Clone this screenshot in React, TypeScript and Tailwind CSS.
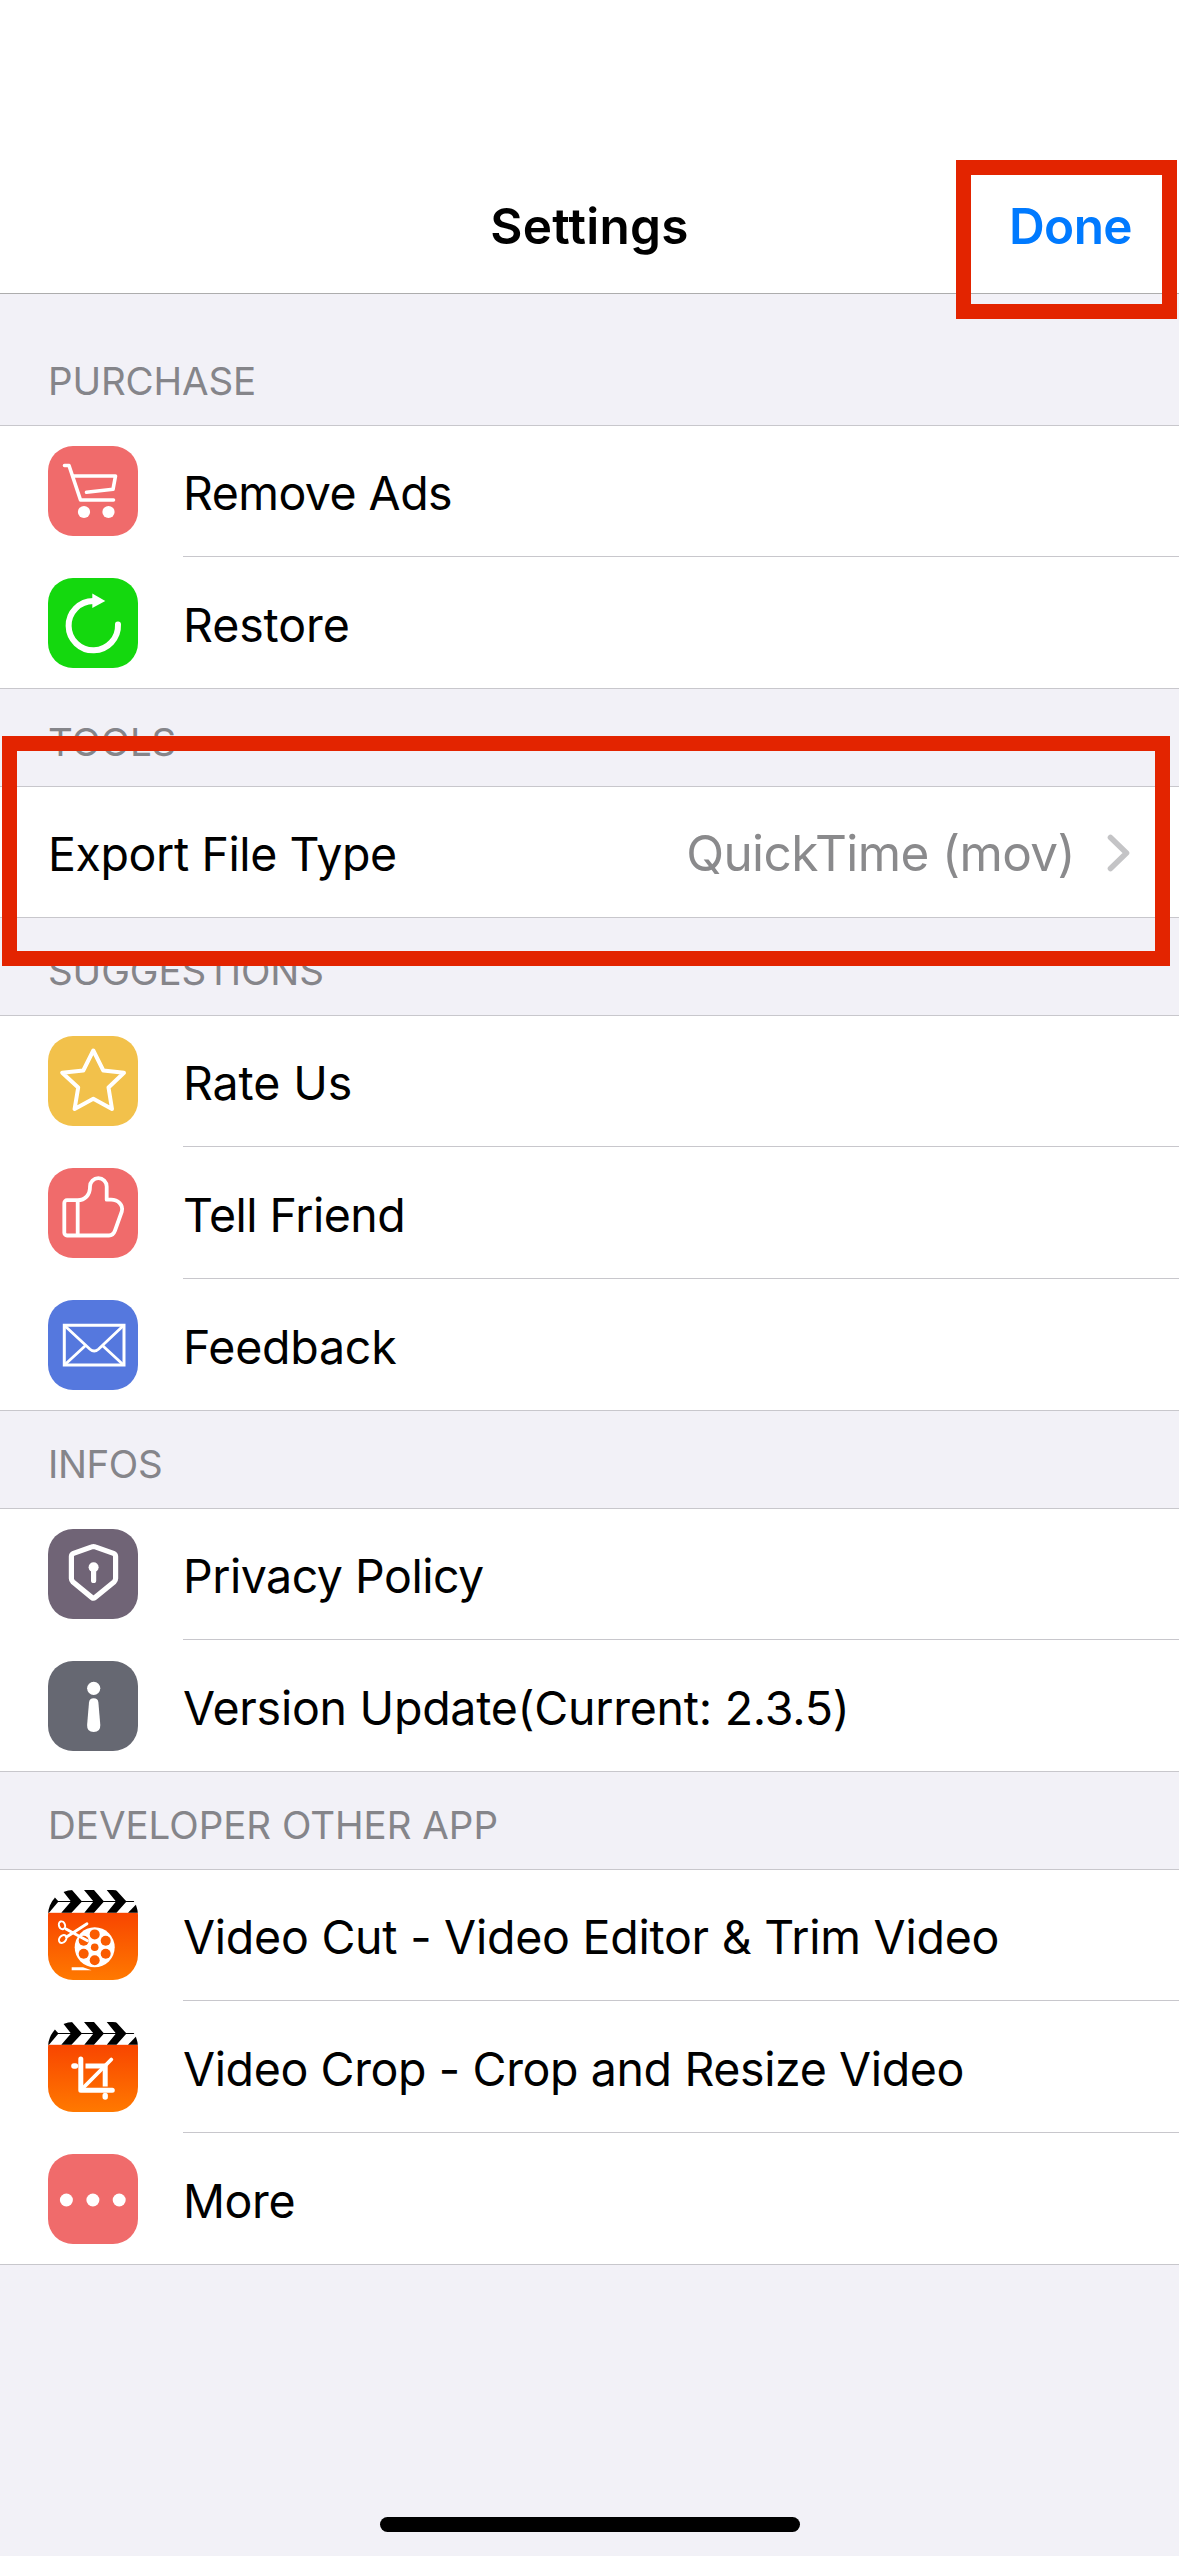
import React from 'react';

interface RowItem {
  label: string;
  tracking: string;
  icon?: React.ReactNode;
  value?: string;
}

interface Section {
  title: string;
  tracking: string;
  headerClass: string;
  rows: RowItem[];
}

const Tile: React.FC<{ color: string; children: React.ReactNode }> = ({ color, children }) => (
  <svg viewBox="0 0 90 90" className={`w-[90px] h-[90px] rounded-[25px] ${color}`} fill="none" stroke="white" strokeLinejoin="round">
    {children}
  </svg>
);

const CartIcon = () => (
  <Tile color="bg-[#f06b6b]">
    <path d="M16.5 19.5h4.5L32.5 54H65.5" strokeWidth="3.6" strokeLinecap="round" />
    <path d="M25 30H67.5L65 43.3L38.5 46.2" strokeWidth="3.6" strokeLinecap="round" />
    <circle cx="36" cy="66" r="6.1" fill="white" stroke="none" />
    <circle cx="60.5" cy="66" r="6.1" fill="white" stroke="none" />
  </Tile>
);

const RestoreIcon = () => (
  <Tile color="bg-[#14d80e]">
    <path d="M70 46.5A24.7 24.7 0 1 1 45.3 22.9" strokeWidth="6" strokeLinecap="round" />
    <path d="M44.3 15.5L57.3 23L44.3 30Z" fill="white" stroke="none" />
  </Tile>
);

const StarIcon = () => (
  <Tile color="bg-[#f2c14b]">
    <path
      d="M45.3 14.5L55.3 34.5L76 36.7L60.5 51.5L64 73L45.3 62.8L26.6 73L30.2 51.5L14.2 36.7L35.3 34.5Z"
      strokeWidth="4"
    />
  </Tile>
);

const ThumbIcon = () => (
  <Tile color="bg-[#f06b6b]">
    <path
      d="M19 32.2H29.7C37 32.2 42 27 42 19V18.5A8.3 8.3 0 0 1 58.7 18.5V31.7H63C70 31.7 75.5 37 73.8 43.5L67 62.5C65.5 66.5 64 67.5 61 67.5H19A2.7 2.7 0 0 1 16.3 64.8V34.9A2.7 2.7 0 0 1 19 32.2Z"
      strokeWidth="3.8"
    />
    <path d="M29.7 33V67" strokeWidth="3.8" />
  </Tile>
);

const MailIcon = () => (
  <Tile color="bg-[#5578de]">
    <path d="M16.3 25.3H76V65H16.3Z" strokeWidth="3" strokeLinejoin="miter" />
    <path d="M17 26L42 49.2Q46.2 52.8 50.4 49.2L75 26M17 64.5L37 46M75 64.5L55 46" strokeWidth="2.8" />
  </Tile>
);

const ShieldIcon = () => (
  <Tile color="bg-[#706476]">
    <path
      d="M43.8 17.9Q45.5 17.2 47.2 17.9L65.5 24.4Q67.6 25.3 67.6 27.5V49.5Q67.6 51.5 66 53L47 68.6Q45.5 69.8 44 68.6L25 53Q23.4 51.5 23.4 49.5V27.5Q23.4 25.3 25.5 24.4Z"
      strokeWidth="5.2"
    />
    <circle cx="45.6" cy="38.3" r="5" fill="white" stroke="none" />
    <path d="M45.6 39V51.4" strokeWidth="5.2" strokeLinecap="round" />
  </Tile>
);

const InfoIcon = () => (
  <Tile color="bg-[#666872]">
    <circle cx="45.7" cy="27.3" r="6.6" fill="white" stroke="none" />
    <path
      d="M41 41.5Q41.5 37.3 45.7 37.3Q49.9 37.3 50.4 41.5L52.3 64Q52.6 71 45.7 71Q38.8 71 39.1 64Z"
      fill="white"
      stroke="none"
    />
  </Tile>
);

const DotsIcon = () => (
  <Tile color="bg-[#f06b6b]">
    {[18.4, 44.9, 71.2].map((cx) => (
      <circle key={cx} cx={cx} cy="46" r="6.5" fill="white" stroke="none" />
    ))}
  </Tile>
);

// clapperboard shared by the two video apps
const Clapper: React.FC<{ id: string; children: React.ReactNode }> = ({ id, children }) => (
  <Tile color="bg-white">
    <defs>
      <linearGradient id={id} x1="0" y1="0" x2="0" y2="1">
        <stop offset="0" stopColor="#f84500" />
        <stop offset="1" stopColor="#ff7900" />
      </linearGradient>
    </defs>
    <rect y="22.8" width="90" height="67.2" fill={`url(#${id})`} stroke="none" />
    <g fill="black" stroke="none">
      <path d="M14 0H24L34 11.5L23.5 22.8H13.3L23 11.5Z" />
      <path d="M36 0H46L56 11.5L46 22.8H36.3L45.5 11.5Z" />
      <path d="M58.7 0H68L78.5 11.5L68.5 22.8H58.8L68 11.5Z" />
      <path d="M4.7 5L10.5 11.5L1 22.8H0V12Z" />
      <path d="M80 22.8L90 12.5V22.8Z" />
      <path d="M10 11H88V12H10Z" />
    </g>
    {children}
  </Tile>
);

const VideoCutIcon = () => (
  <Clapper id="cut">
    <circle cx="46.7" cy="57.3" r="20" fill="white" stroke="none" />
    <g fill="#fa5c00" stroke="none">
      <circle cx="46.7" cy="57.3" r="3.8" />
      <circle cx="46.7" cy="44.4" r="5" />
      <circle cx="46.7" cy="70.2" r="5" />
      <circle cx="57.7" cy="50.8" r="5" />
      <circle cx="57.7" cy="63.8" r="5" />
      <circle cx="35.7" cy="50.8" r="5" />
      <circle cx="35.7" cy="63.8" r="5" />
    </g>
    <path d="M18 39L39.5 50.7M18.5 47L39 33.8" strokeWidth="2.8" strokeLinecap="round" />
    <ellipse cx="14" cy="35.3" rx="3" ry="4" strokeWidth="2" transform="rotate(-20 14 35.3)" />
    <ellipse cx="14.7" cy="49" rx="3.2" ry="4.4" strokeWidth="2" transform="rotate(40 14.7 49)" />
    <path d="M23.7 77.3H35L43.5 80.3H23.7Z" fill="white" stroke="none" />
  </Clapper>
);

const VideoCropIcon = () => (
  <Clapper id="crop">
    <path d="M32.8 37V68.2H64.3" strokeWidth="5" strokeLinecap="round" />
    <path d="M37.5 44H57.2V64.5" strokeWidth="5" strokeLinejoin="miter" />
    <path d="M35 66L63.3 37.5" strokeWidth="3.8" strokeLinecap="round" />
    <path d="M25.9 44H27.5" strokeWidth="5.4" strokeLinecap="round" />
    <path d="M57.2 73.5V75" strokeWidth="5.4" strokeLinecap="round" />
  </Clapper>
);

const sections: Section[] = [
  {
    title: 'PURCHASE',
    tracking: 'tracking-[-0.15px]',
    headerClass: 'h-[131px]',
    rows: [
      { label: 'Remove Ads', tracking: 'tracking-[-0.55px]', icon: <CartIcon /> },
      { label: 'Restore', tracking: 'tracking-[-0.1px]', icon: <RestoreIcon /> },
    ],
  },
  {
    title: 'TOOLS',
    tracking: 'tracking-[-0.2px]',
    headerClass: 'h-[97px]',
    rows: [{ label: 'Export File Type', tracking: 'tracking-[-0.4px]', value: 'QuickTime (mov)' }],
  },
  {
    title: 'SUGGESTIONS',
    tracking: 'tracking-[-0.1px]',
    headerClass: 'h-[97px]',
    rows: [
      { label: 'Rate Us', tracking: 'tracking-[-0.1px]', icon: <StarIcon /> },
      { label: 'Tell Friend', tracking: 'tracking-[-0.5px]', icon: <ThumbIcon /> },
      { label: 'Feedback', tracking: 'tracking-[-0.25px]', icon: <MailIcon /> },
    ],
  },
  {
    title: 'INFOS',
    tracking: 'tracking-[-0.4px]',
    headerClass: 'h-[97px]',
    rows: [
      { label: 'Privacy Policy', tracking: 'tracking-[-0.5px]', icon: <ShieldIcon /> },
      { label: 'Version Update(Current: 2.3.5)', tracking: 'tracking-[-0.25px]', icon: <InfoIcon /> },
    ],
  },
  {
    title: 'DEVELOPER OTHER APP',
    tracking: 'tracking-[-0.02px]',
    headerClass: 'h-[97px]',
    rows: [
      { label: 'Video Cut - Video Editor & Trim Video', tracking: 'tracking-[-0.25px]', icon: <VideoCutIcon /> },
      { label: 'Video Crop - Crop and Resize Video', tracking: 'tracking-[-0.38px]', icon: <VideoCropIcon /> },
      { label: 'More', tracking: 'tracking-[-0.4px]', icon: <DotsIcon /> },
    ],
  },
];

const SettingsRow: React.FC<{ row: RowItem; first: boolean; last: boolean }> = ({ row, first, last }) => (
  <div
    className={`flex h-[132px] pl-12 bg-white border-[#c8c7cc] ${first ? 'border-t pt-[20px]' : 'pt-[21px]'} ${last ? 'border-b' : ''}`}
  >
    {row.icon && <div className="w-[135px] shrink-0">{row.icon}</div>}
    <div className={`flex flex-1 justify-between border-[#c8c7cc] ${last ? '' : 'border-b'}`}>
      <span className={`h-[94px] leading-[94px] text-[46.5px] text-black whitespace-nowrap ${row.tracking}`}>{row.label}</span>
      {row.value && (
        <div className="flex h-[92px] items-center pr-[49px]">
          <span className="text-[49.5px] leading-[92px] tracking-[-0.6px] text-[#8a8a8c] whitespace-nowrap">{row.value}</span>
          <svg viewBox="0 0 23 38" className="ml-[32px] w-[23px] h-[38px]" fill="none" stroke="#c4c4c6" strokeWidth="5.6" strokeLinecap="round" strokeLinejoin="round">
            <path d="M3.5 3.5L19.5 19L3.5 34.5" />
          </svg>
        </div>
      )}
    </div>
  </div>
);

const App: React.FC = () => {
  return (
    <div className="relative flex flex-col w-[1179px] h-[2556px] overflow-hidden bg-[#f2f1f7] font-['Inter','Liberation_Sans',sans-serif]">
      {/* Navigation bar */}
      <header className="grid grid-cols-3 items-end h-[294px] pb-[34px] bg-white border-b border-[#adadad]">
        <span />
        <h1 className="text-center text-[49.5px] leading-[66px] font-semibold tracking-[0.25px] text-black">Settings</h1>
        <button className="justify-self-end mr-[47px] text-[49.5px] leading-[66px] font-semibold tracking-[-0.6px] text-[#007aff]">Done</button>
      </header>

      {sections.map((section) => (
        <section key={section.title}>
          <div className={`flex items-end pl-12 pb-[20px] ${section.headerClass}`}>
            <h2 className={`text-[38.5px] leading-[48px] text-[#85858a] ${section.tracking}`}>{section.title}</h2>
          </div>
          {section.rows.map((row, i) => (
            <SettingsRow key={row.label} row={row} first={i === 0} last={i === section.rows.length - 1} />
          ))}
        </section>
      ))}

      {/* Home indicator */}
      <div className="mt-auto mb-[24px] self-center w-[420px] h-[15px] rounded-full bg-black" />

      {/* Highlight frames */}
      <div className="absolute left-[956px] top-[160px] w-[221px] h-[159px] border-[15px] border-[#e32400]" />
      <div className="absolute left-[2px] top-[736px] w-[1168px] h-[230px] border-[15px] border-[#e32400]" />
    </div>
  );
};

export default App;
